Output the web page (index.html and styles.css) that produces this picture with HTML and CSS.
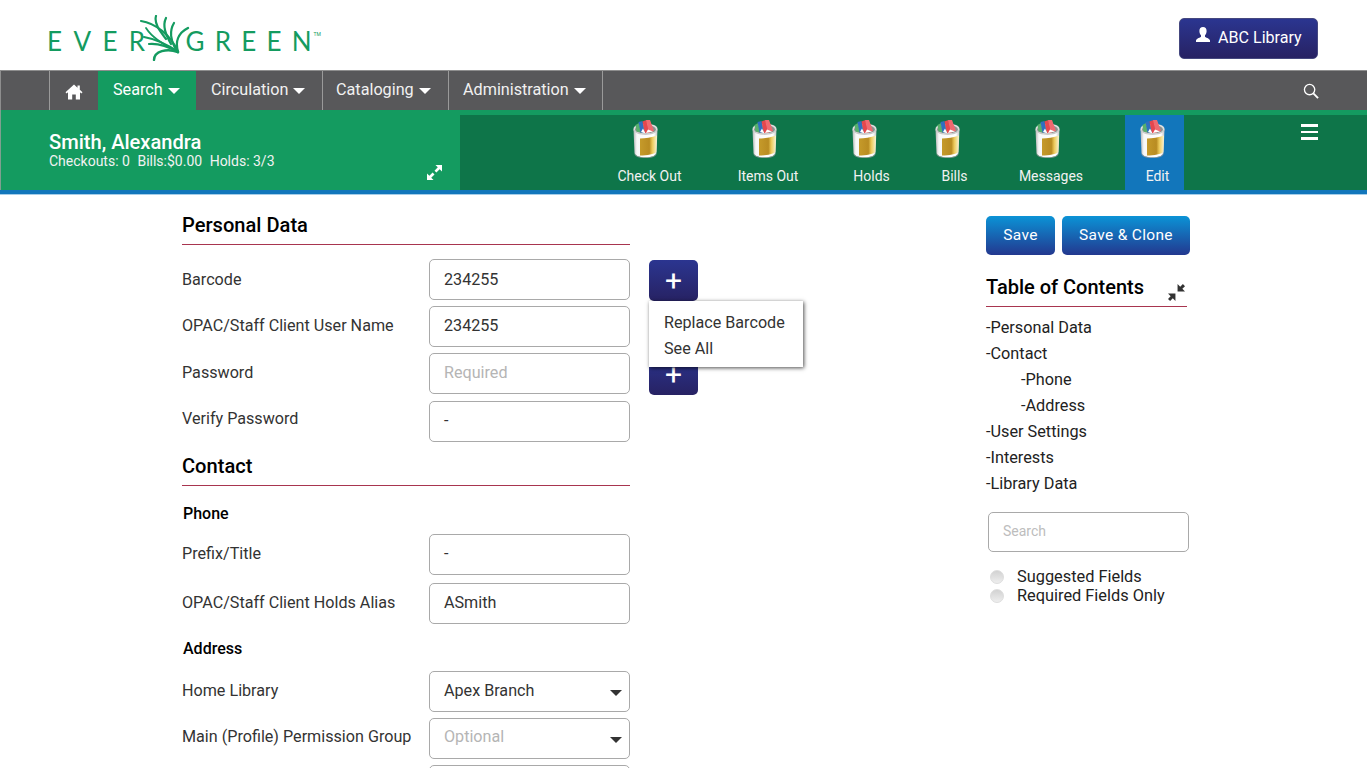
FILE: index.html
```html
<!DOCTYPE html>
<html lang="en">
<head>
<meta charset="utf-8">
<title>Evergreen - Edit Patron</title>
<link rel="stylesheet" href="styles.css">
</head>
<body>
<svg class="defs" width="0" height="0" aria-hidden="true">
  <defs>
    <linearGradient id="cupBody" x1="0" x2="1" y1="0" y2="0">
      <stop offset="0" stop-color="#b5b5b5"/><stop offset=".14" stop-color="#f8f8f8"/><stop offset=".85" stop-color="#ffffff"/><stop offset="1" stop-color="#c4c4c4"/>
    </linearGradient>
    <linearGradient id="cupLabel" x1="0" x2="1" y1="0" y2="0">
      <stop offset="0" stop-color="#c59a2a"/><stop offset=".55" stop-color="#b98c22"/><stop offset=".72" stop-color="#ecc95a"/><stop offset="1" stop-color="#f9f4d0"/>
    </linearGradient>
    <symbol id="cup" viewBox="0 0 25 38">
      <ellipse cx="12.500" cy="9" rx="12" ry="5.500" fill="#dedede"/>
      <ellipse cx="12.500" cy="9.500" rx="10.500" ry="4.500" fill="#8b938e"/>
      <path d="M2.500 5 L6 3 L8.500 12.500 L3.500 11.500Z" fill="#58b06c"/>
      <path d="M5.500 2 L9.500 1 L11.500 13 L7.500 12.500Z" fill="#2f6fc0"/>
      <path d="M9.500 1.500 L13.500 0 L16.500 12.500 L12 13.500Z" fill="#e5474e"/>
      <path d="M13 0 L17 0 L21 11 L16 12.500Z" fill="#ef6a70"/>
      <path d="M8 12 L10 8.500 L12.500 13.500Z" fill="#fff"/>
      <path d="M13 13 L15 9.500 L20 11.500Z" fill="#fff"/>
      <path d="M.5 9 C2 15 23 15 24.500 9 L23.500 33 C22 39 3 39 1.500 33Z" fill="url(#cupBody)"/>
      <path d="M.5 9 C2 15 23 15 24.500 9 L24.500 10 C22 16.500 3 16.500 .5 10Z" fill="#c9c9c9"/>
      <path d="M7 18.500 C12 18.500 19 17.500 24 15.500 L23.300 32 C21.500 34 14 35.500 7 35.500Z" fill="url(#cupLabel)"/>
      <path d="M1.500 33 C3 39 22 39 23.500 33 L23.500 34 C22 39.500 3 39.500 1.500 34Z" fill="#9a9a9a"/>
    </symbol>
  </defs>
</svg>

<header class="top">
  <div class="logo">
    <span class="logo-word logo-left">EVER</span>
    <svg class="leaf" viewBox="0 0 66 46" width="66" height="46" aria-hidden="true">
      <g fill="none" stroke="#149b60" stroke-linecap="round">
        <path d="M2 6 C16 8 32 20 39 37" stroke-width="2.200"/>
        <path d="M7 13 C14 24 27 31 38 36" stroke-width="1.800"/>
        <path d="M5 22 C16 24 28 29 39 37" stroke-width="2.200"/>
        <path d="M10 29 C20 28 30 32 39 37" stroke-width="2.200"/>
        <path d="M15 45 C15 36 28 33 39 37" stroke-width="2.400"/>
        <path d="M17 1 C15 8 20 15 27 24" stroke-width="2.200"/>
        <path d="M27 3 C23 11 27 20 32 29" stroke-width="2.200"/>
        <path d="M35 8 C30 16 32 26 36 33" stroke-width="2.200"/>
        <path d="M49 13 C39 18 36 27 39 37" stroke-width="2.400"/>
      </g>
    </svg>
    <span class="logo-word logo-right">GREE<span class="logo-last">N</span></span>
    <span class="logo-tm">TM</span>
  </div>
  <button class="lib-btn" type="button">
    <svg class="lib-icon" viewBox="0 0 16 16" width="16" height="16" aria-hidden="true"><path fill="#fff" d="M8 0c2.300 0 3.600 1.700 3.600 3.900 0 1.700-.7 3.300-1.600 4.300v1.500c0 .8 4.800 1.600 5 3.800v1.500H1v-1.500c.2-2.200 5-3 5-3.800V8.200C5.100 7.200 4.400 5.600 4.400 3.900 4.400 1.700 5.700 0 8 0z"/></svg>
    ABC Library
  </button>
</header>

<nav class="nav">
  <a class="nav-item nav-home"><svg viewBox="0 0 18 16" width="18" height="16" aria-hidden="true"><path fill="#fff" d="M9 .5 0.500 8.200 1.700 9.400 3 8.300V15.500H7.200V10.500H10.800V15.500H15V8.300L16.300 9.400 17.500 8.200 14.800 5.800V1.500H12.500V3.700Z"/></svg></a>
  <a class="nav-item nav-search">Search<i class="caret"></i></a>
  <a class="nav-item nav-circ">Circulation<i class="caret"></i></a>
  <a class="nav-item nav-cat">Cataloging<i class="caret"></i></a>
  <a class="nav-item nav-admin">Administration<i class="caret"></i></a>
  <svg class="nav-find" viewBox="0 0 17 17" width="16" height="16" aria-hidden="true"><circle cx="7" cy="7" r="5.500" fill="none" stroke="#fff" stroke-width="1.400"/><path d="M11 11l5 5" stroke="#fff" stroke-width="2"/></svg>
</nav>

<section class="patron">
  <div class="patron-info">
    <div class="patron-name">Smith, Alexandra</div>
    <div class="patron-stats"><span>Checkouts: 0</span><span>Bills:$0.00</span><span>Holds: 3/3</span></div>
    <svg class="expand" viewBox="0 0 16 16" width="15" height="15" aria-hidden="true"><path fill="#fff" d="M9 0h7v7l-2.500-2.500L10 8 8 6l3.500-3.500zM0 16V9l2.500 2.500L6 8l2 2-3.500 3.500L7 16z"/></svg>
  </div>
  <div class="patron-tabs">
    <a class="tab tab-checkout"><svg class="cup"><use href="#cup"/></svg><span>Check Out</span></a>
    <a class="tab tab-items"><svg class="cup"><use href="#cup"/></svg><span>Items Out</span></a>
    <a class="tab tab-holds"><svg class="cup"><use href="#cup"/></svg><span>Holds</span></a>
    <a class="tab tab-bills"><svg class="cup"><use href="#cup"/></svg><span>Bills</span></a>
    <a class="tab tab-messages"><svg class="cup"><use href="#cup"/></svg><span>Messages</span></a>
    <a class="tab tab-edit"><svg class="cup"><use href="#cup"/></svg><span>Edit</span></a>
    <div class="burger"><i></i><i></i><i></i></div>
  </div>
</section>

<main class="page">
  <div class="form-col">
    <h2 class="sec-title sec-personal">Personal Data</h2>
    <div class="row row-a"><label>Barcode</label><div class="field">234255</div>
      <div class="row-extra">
        <button class="plus" type="button">+</button>
        <div class="menu"><div>Replace Barcode</div><div>See All</div></div>
      </div>
    </div>
    <div class="row row-b"><label>OPAC/Staff Client User Name</label><div class="field">234255</div></div>
    <div class="row row-c"><label>Password</label><div class="field ph">Required</div>
      <div class="row-extra"><button class="plus" type="button">+</button></div>
    </div>
    <div class="row row-d"><label>Verify Password</label><div class="field">-</div></div>

    <h2 class="sec-title sec-contact">Contact</h2>
    <h3 class="sub sub-phone">Phone</h3>
    <div class="row row-e"><label>Prefix/Title</label><div class="field">-</div></div>
    <div class="row row-f"><label>OPAC/Staff Client Holds Alias</label><div class="field">ASmith</div></div>
    <h3 class="sub sub-address">Address</h3>
    <div class="row row-g"><label>Home Library</label><div class="field select">Apex Branch</div></div>
    <div class="row row-h"><label>Main (Profile) Permission Group</label><div class="field select ph">Optional</div></div>
    <div class="row row-i"><label></label><div class="field"></div></div>
  </div>

  <aside class="side">
    <div class="actions">
      <button class="blue" type="button">Save</button>
      <button class="blue clone" type="button">Save &amp; Clone</button>
    </div>
    <div class="toc-head">
      <h2>Table of Contents</h2>
      <svg viewBox="0 0 16 16" width="17" height="17" aria-hidden="true"><path fill="#333" d="M16 2 13.500 4.500 16 7H9V0l2.500 2.500L14 0zM0 14l2.500-2.500L0 9h7v7l-2.500-2.500L2 16z"/></svg>
    </div>
    <ul class="toc">
      <li>-Personal Data</li>
      <li>-Contact</li>
      <li class="in">-Phone</li>
      <li class="in">-Address</li>
      <li>-User Settings</li>
      <li>-Interests</li>
      <li>-Library Data</li>
    </ul>
    <div class="side-search">Search</div>
    <div class="radio radio-a"><i></i>Suggested Fields</div>
    <div class="radio"><i></i>Required Fields Only</div>
  </aside>
</main>
</body>
</html>
```
FILE: styles.css
```css
* { box-sizing: border-box; }
html, body { margin: 0; padding: 0; }
body { width: 1367px; height: 768px; overflow: hidden; background: #fff; font-family: Roboto, "Liberation Sans", sans-serif; font-size: 16.150px; color: #333; }
.defs { display: block; height: 0; }

/* header */
.top { height: 70px; display: flex; align-items: flex-start; justify-content: space-between; padding: 18px 49px 0 47px; }
.logo { display: flex; align-items: flex-start; position: relative; color: #149b60; margin-top: -3px; }
.logo-word { font-family: Lato, sans-serif; font-weight: 400; font-size: 26px; line-height: 26px; margin-top: 13px; color: #149b60; }
.logo-left { letter-spacing: 11.400px; }
.logo-right { letter-spacing: 10.200px; }
.logo-last { letter-spacing: 0; }
.leaf { margin: 0 -19px 0 -18px; position: relative; }
.logo-tm { font-size: 5px; line-height: 6px; margin: 16px 0 0 2px; }
.lib-btn { width: 139px; height: 41px; border: 1px solid #45487f; border-radius: 5px; background: linear-gradient(#2b3590, #272263); color: #fff; font: 400 16.100px Roboto, sans-serif; display: flex; align-items: center; padding: 0 0 2px 15px; gap: 7px; }
.lib-icon { margin-top: -5px; }

/* nav */
.nav { height: 40px; background: #58585a; border-top: 1px solid #8e8e8e; border-left: 1px solid #8e8e8e; display: flex; align-items: stretch; color: #f1f1f1; padding-left: 48px; position: relative; }
.nav-item { display: flex; align-items: center; font-size: 16.200px; border-left: 1px solid #9a9a9a; padding-bottom: 2px; }
.nav-home { width: 49px; justify-content: center; padding-top: 4px; }
.nav-search { width: 98px; background: #149b60; padding-left: 15px; border-left: 0; color: #fff; }
.nav-circ { width: 126px; padding-left: 15px; border-left: 0; }
.nav-cat { width: 126px; padding-left: 13px; }
.nav-admin { width: 155px; padding-left: 14px; border-right: 1px solid #9a9a9a; }
.caret { display: inline-block; width: 0; height: 0; margin-left: 5px; margin-top: 2px; border-left: 6px solid transparent; border-right: 6px solid transparent; border-top: 6px solid #fff; }
.nav-find { position: absolute; right: 48px; top: 12px; }

/* patron bar */
.patron { height: 84px; display: flex; border-bottom: 4px solid #1276bb; box-shadow: 0 1px 0 #a5cde8; color: #fff; }
.patron-info { width: 460px; background: #149b60; padding: 21px 0 0 48px; position: relative; border-left: 1px solid #7f9f90; }
.patron-name { font-size: 20.100px; font-weight: 500; line-height: 22px; }
.patron-stats { display: flex; gap: 7.500px; font-size: 14px; line-height: 16px; color: #f2f2f2; }
.expand { position: absolute; right: 18px; top: 55px; }
.patron-tabs { flex: 1; background: #0e7549; border-top: 5px solid #149b60; display: flex; padding-left: 157px; position: relative; }
.tab { display: flex; flex-direction: column; align-items: center; font-size: 14px; line-height: 16px; color: #f2f2f2; }
.cup { width: 25px; height: 38px; margin: 5px 8px 10px 0; display: block; flex: none; }
.tab-checkout { width: 65px; margin-right: 55px; }
.tab-items { width: 62px; margin-right: 54px; }
.tab-holds { width: 37px; margin-right: 51px; }
.tab-bills { width: 27px; margin-right: 50px; }
.tab-holds .cup, .tab-bills .cup { margin-right: 14px; }
.tab-messages { width: 66px; margin-right: 41px; }
.tab-edit { width: 59px; padding-left: 6px; background: #1276bb; }
.tab-edit .cup { margin-right: 11px; }
.burger { position: absolute; left: 841px; top: 9px; width: 17px; display: flex; flex-direction: column; gap: 4px; }
.burger i { display: block; height: 2.500px; background: #fff; }

/* page */
.page { display: grid; grid-template-columns: 804px 205px; padding-left: 182px; }
.form-col { width: 448px; }
.sec-title { margin: 0; font-size: 20.100px; font-weight: 500; line-height: 24px; color: #000; border-bottom: 1px solid #a8354f; padding-bottom: 7px; }
.sec-personal { margin-top: 19px; margin-bottom: 14px; }
.sec-contact { margin-top: 12px; }
.sub { margin: 0; font-size: 16px; font-weight: 500; line-height: 20px; color: #000; padding-left: 1px; }
.sub-phone { margin-top: 18px; margin-bottom: 10px; }
.sub-address { margin-top: 15px; margin-bottom: 12px; }
.row { display: flex; align-items: center; height: 41px; position: relative; }
.row label { width: 247px; flex: none; color: #333; padding-bottom: 3px; }
.row-a label { padding-bottom: 1px; }
.row-d label { padding-bottom: 6px; }
.row-h label { padding-bottom: 5px; }
.row-b { margin-top: 6px; }
.row-c { margin-top: 6px; }
.row-d { margin-top: 7px; }
.row-f { margin-top: 8px; }
.row-h { margin-top: 6px; }
.row-i { margin-top: 6px; }
.field { width: 201px; height: 41px; border: 1px solid #a9a9a9; border-radius: 5px; padding: 0 14px; line-height: 37px; color: #333; position: relative; }
.row-a .field { line-height: 39px; }
.row-h .field { line-height: 35px; }
.field.ph { color: #b5b5b5; }
.field.select::after { content: ""; position: absolute; right: 7px; top: 18px; border-left: 6px solid transparent; border-right: 6px solid transparent; border-top: 6px solid #333; }
.row-extra { position: absolute; left: 467px; top: 1px; }
.plus { width: 49px; height: 41px; border: 0; border-radius: 5px; background: linear-gradient(#2b3590, #272263); color: #fff; font: 400 30px/38px Roboto, sans-serif; padding: 0; }
.menu { position: absolute; left: 0; top: 41px; width: 154px; height: 66px; background: #fff; box-shadow: 1px 1px 4px rgba(0,0,0,.7); padding: 9px 15px; line-height: 26px; color: #333; z-index: 2; }

/* side */
.side { padding-top: 22px; }
.actions { display: flex; gap: 7px; }
.blue { height: 39px; width: 69px; border: 0; border-radius: 5px; background: linear-gradient(#0b93d6, #23388f); color: #fff; font: 400 15.500px Roboto, sans-serif; letter-spacing: .32px; padding: 0 0 2px; }
.clone { width: 128px; }
.toc-head { display: flex; justify-content: space-between; align-items: flex-start; width: 201px; margin-top: 20px; border-bottom: 1px solid #a8354f; height: 32px; }
.toc-head h2 { margin: 0; font-size: 20px; font-weight: 500; line-height: 24px; color: #000; }
.toc-head svg { margin: 9px 2px 0 0; }
.toc { list-style: none; margin: 8px 0 0; padding: 0; color: #222; font-size: 16.250px; }
.toc li { line-height: 26px; }
.toc .in { padding-left: 35px; }
.side-search { width: 201px; height: 40px; margin: 15px 0 0 2px; border: 1px solid #a9a9a9; border-radius: 5px; padding: 0 14px; line-height: 37px; font-size: 14px; color: #bdbdbd; }
.radio { display: flex; align-items: center; height: 19px; color: #222; padding-left: 4px; font-size: 16.350px; }
.radio-a { margin-top: 15px; }
.radio i { width: 14px; height: 14px; border-radius: 50%; background: linear-gradient(#d2d2d2, #eeeeee); border: 1px solid #ddd; margin-right: 13px; margin-top: 1px; }
```
